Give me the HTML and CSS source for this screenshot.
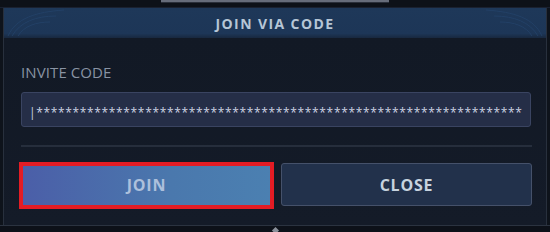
FILE: index.html
```html
<!DOCTYPE html>
<html>
<head>
<meta charset="utf-8">
<link rel="stylesheet" href="styles.css">
</head>
<body>
<div class="page">
  <div class="topstrip"><div class="scrollbar"></div></div>
  <div class="dialog">
    <div class="header">
      <svg class="orn orn-left" width="60" height="30" viewBox="0 0 60 30"><path d="M2 28 C10 10 30 4 58 2 M6 28 C14 14 30 8 50 8 M12 28 C18 18 30 14 44 14" fill="none" stroke="#24436a" stroke-width="1"/></svg>
      <h1 class="title">JOIN VIA CODE</h1>
      <svg class="orn orn-right" width="60" height="30" viewBox="0 0 60 30"><path d="M58 28 C50 10 30 4 2 2 M54 28 C46 14 30 8 10 8 M48 28 C42 18 30 14 16 14" fill="none" stroke="#24436a" stroke-width="1"/></svg>
    </div>
    <div class="content">
      <label class="label">INVITE CODE</label>
      <div class="input">|*******************************************************************</div>
      <div class="divider"></div>
      <div class="buttons">
        <button class="btn btn-join">JOIN</button>
        <button class="btn btn-close">CLOSE</button>
      </div>
    </div>
  </div>
  <div class="bottomstrip"><span class="diamond"></span></div>
</div>
</body>
</html>
```
FILE: styles.css
```css
* { box-sizing: border-box; }
html, body { margin: 0; padding: 0; }
body {
  width: 550px;
  height: 232px;
  background: #0e131b;
  font-family: "Open Sans", "Noto Sans", sans-serif;
  overflow: hidden;
}
.page { display: flex; flex-direction: column; height: 232px; }
.topstrip {
  height: 8px;
  display: flex;
  justify-content: center;
  background: #0d1118;
  border-bottom: 1px solid #1a2130;
}
.scrollbar {
  width: 228px;
  height: 3px;
  background: #666c7a;
  border-bottom: 1px solid #2a2f3a;
}
.dialog {
  margin: 0 3px;
  border-left: 1px solid #28303d;
  border-right: 1px solid #28303d;
  background: #131a26;
  display: flex;
  flex-direction: column;
  flex: 1;
}
.header {
  position: relative;
  height: 30px;
  background: linear-gradient(#1e3859, #1d3657 85%, #18283f);
  display: flex;
  align-items: center;
  justify-content: center;
}
.orn { position: absolute; top: 0; opacity: 0.8; }
.orn-left { left: 2px; }
.orn-right { right: 2px; }
.title {
  margin: 0;
  font-size: 14px;
  font-weight: 700;
  letter-spacing: 1.4px;
  color: #b6c6d6;
}
.content {
  padding: 24px 14px 0 17px;
  display: flex;
  flex-direction: column;
  background: linear-gradient(#121925, #141b28);
  flex: 1;
}
.label {
  font-size: 15px;
  color: #8993a3;
  line-height: 20px;
  letter-spacing: 0.1px;
}
.input {
  margin-top: 10px;
  height: 35px;
  width: 510px;
  background: #252e47;
  border: 1px solid #3a4461;
  border-radius: 3px;
  color: #ccd3e2;
  font-size: 12px;
  line-height: 33px;
  padding: 3px 0 0 7px;
  letter-spacing: 0.65px;
  overflow: hidden;
  white-space: nowrap;
}
.divider {
  margin-top: 18px;
  height: 2px;
  width: 511px;
  background: #262e3c;
}
.buttons {
  margin-top: 16px;
  display: grid;
  grid-template-columns: 251px 251px;
  gap: 9px;
}
.btn {
  height: 43px;
  font-family: inherit;
  font-size: 16px;
  font-weight: 700;
  letter-spacing: 0.8px;
  border-radius: 3px;
  padding: 0;
}
.btn-join {
  position: relative;
  border: none;
  background: linear-gradient(90deg, #4b5ea8, #4a78ad 60%, #4b80b1);
  color: #adc0dc;
}
.btn-join::after {
  content: "";
  position: absolute;
  left: -2px;
  right: -2px;
  top: -1px;
  bottom: -3px;
  border: 4px solid #e41c24;
}
.btn-close {
  background: #22314b;
  border: 1px solid #45516a;
  color: #c7d3df;
}
.bottomstrip {
  height: 7px;
  border-top: 1px solid #2b3340;
  background: #0d1119;
  display: flex;
  justify-content: center;
}
.diamond {
  width: 5px;
  height: 5px;
  margin-top: 2px;
  background: #8a909a;
  transform: rotate(45deg);
}
```
